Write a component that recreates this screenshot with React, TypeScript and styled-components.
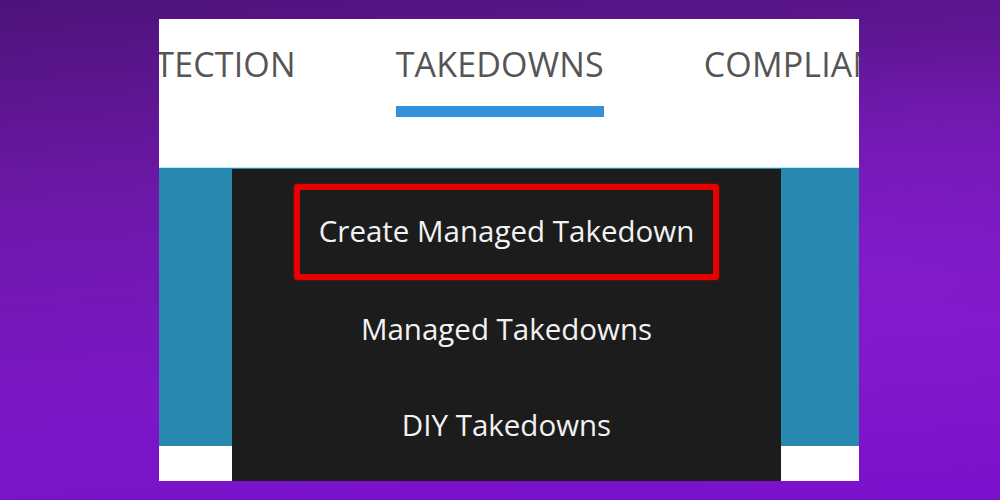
import styled, { createGlobalStyle } from "styled-components";

const GlobalStyle = createGlobalStyle`
  html, body {
    margin: 0;
    padding: 0;
  }
  body {
    font-family: "Open Sans", "Liberation Sans", sans-serif;
  }
`;

const Page = styled.div`
  width: 1000px;
  height: 500px;
  box-sizing: border-box;
  padding: 19px 0 0 159px;
  overflow: hidden;
  background:
    radial-gradient(ellipse at 85% 55%, rgba(140, 30, 215, 0.55), transparent 60%),
    linear-gradient(175deg, #4e1379 0%, #6c18a8 35%, #7c16c6 70%, #7a10cc 100%);
`;

const Panel = styled.div`
  width: 700px;
  height: 462px;
  background: #ffffff;
  display: flex;
  flex-direction: column;
  overflow: hidden;
  position: relative;
`;

const Header = styled.div`
  height: 148px;
  box-sizing: border-box;
  padding-top: 22px;
  overflow: hidden;
`;

const Tabs = styled.div`
  display: flex;
  gap: 100px;
  margin-left: -72px;
  white-space: nowrap;
`;

const Tab = styled.div<{ $active?: boolean }>`
  display: flex;
  flex-direction: column;
  align-items: stretch;
  gap: 19px;
  font-size: 34px;
  line-height: 46px;
  color: #555555;
  letter-spacing: 0.15px;

  &::after {
    content: "";
    height: 11px;
    background: ${(p) => (p.$active ? "#3591da" : "transparent")};
  }
`;

const Band = styled.div`
  height: 279px;
  background: #2788b0;
  border-top: 1px solid #bfeaf5;
  box-sizing: border-box;
`;

const Footer = styled.div`
  flex: 1;
  background: #ffffff;
`;

const Menu = styled.div`
  position: absolute;
  left: 73px;
  top: 150px;
  width: 549px;
  bottom: 0;
  background: #1c1c1c;
  box-sizing: border-box;
  padding: 15px 0 0;
  display: flex;
  flex-direction: column;
  align-items: center;
`;

const MenuItem = styled.div<{ $marked?: boolean }>`
  width: 425px;
  height: 96px;
  box-sizing: border-box;
  display: flex;
  align-items: center;
  justify-content: center;
  font-size: 29.5px;
  color: #f2f2f2;
  border: 6px solid ${(p) => (p.$marked ? "#e80000" : "transparent")};
  border-radius: 3px;
  box-shadow: ${(p) => (p.$marked ? "0 0 3px rgba(255, 0, 0, 0.5)" : "none")};
  padding-bottom: ${(p) => (p.$marked ? "3px" : "0")};
`;

export default function App() {
  return (
    <>
      <GlobalStyle />
      <Page>
        <Panel>
          <Header>
            <Tabs>
              <Tab>PROTECTION</Tab>
              <Tab $active>TAKEDOWNS</Tab>
              <Tab>COMPLIANCE</Tab>
            </Tabs>
          </Header>
          <Band />
          <Footer />
          <Menu>
            <MenuItem $marked>Create Managed Takedown</MenuItem>
            <MenuItem>Managed Takedowns</MenuItem>
            <MenuItem>DIY Takedowns</MenuItem>
          </Menu>
        </Panel>
      </Page>
    </>
  );
}
